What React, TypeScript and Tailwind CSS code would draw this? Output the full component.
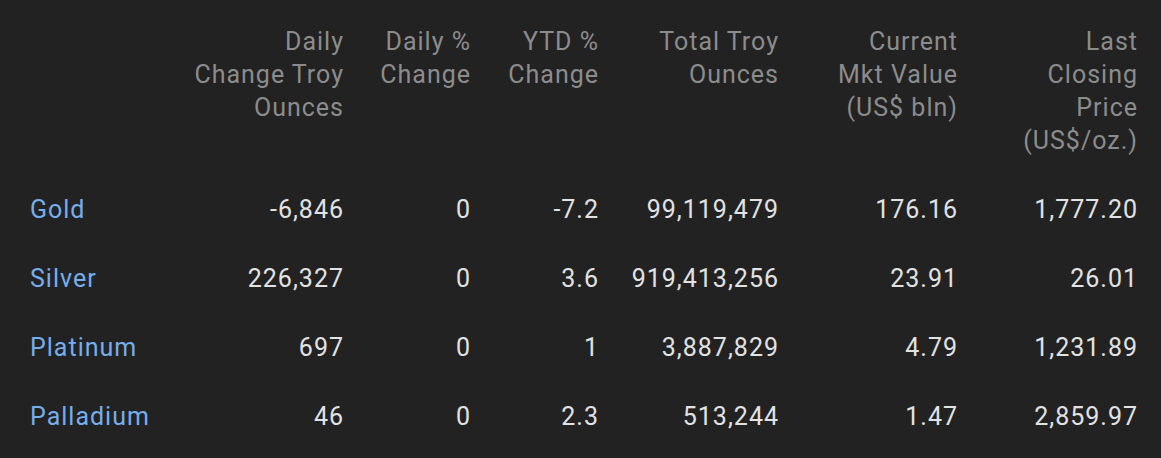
import React from "react";

const headers: React.ReactNode[] = [
  <>Daily<br />Change Troy<br />Ounces</>,
  <>Daily %<br />Change</>,
  <>YTD %<br />Change</>,
  <>Total Troy<br />Ounces</>,
  <>Current<br />Mkt Value<br />(US$ bln)</>,
  <>Last<br />Closing<br />Price<br />(US$/oz.)</>,
];

const rows = [
  ["Gold", "-6,846", "0", "-7.2", "99,119,479", "176.16", "1,777.20"],
  ["Silver", "226,327", "0", "3.6", "919,413,256", "23.91", "26.01"],
  ["Platinum", "697", "0", "1", "3,887,829", "4.79", "1,231.89"],
  ["Palladium", "46", "0", "2.3", "513,244", "1.47", "2,859.97"],
];

export default function App() {
  return (
    <div
      className="w-[1161px] h-[458px] bg-[#222222] pl-[30px] pr-[24px] pt-[7px] overflow-hidden"
      style={{ fontFamily: "Roboto, 'Noto Sans', sans-serif" }}
    >
      <div className="grid grid-cols-[160px_153px_127px_128px_180px_179px_180px] text-[25px] leading-[33px] tracking-[1px]">
        <div className="py-[18px]" />
        {headers.map((h, i) => (
          <div key={i} className="py-[18px] text-right text-[#8c8c8c] self-start -mr-[1px]">
            {h}
          </div>
        ))}
        {rows.map((r) => (
          <React.Fragment key={r[0]}>
            <div className="py-[18px] text-[#76aeec]">{r[0]}</div>
            {r.slice(1).map((v, j) => (
              <div key={j} className="py-[18px] text-right text-[#e2e2e2] -mr-[1px]">
                {v}
              </div>
            ))}
          </React.Fragment>
        ))}
      </div>
    </div>
  );
}
